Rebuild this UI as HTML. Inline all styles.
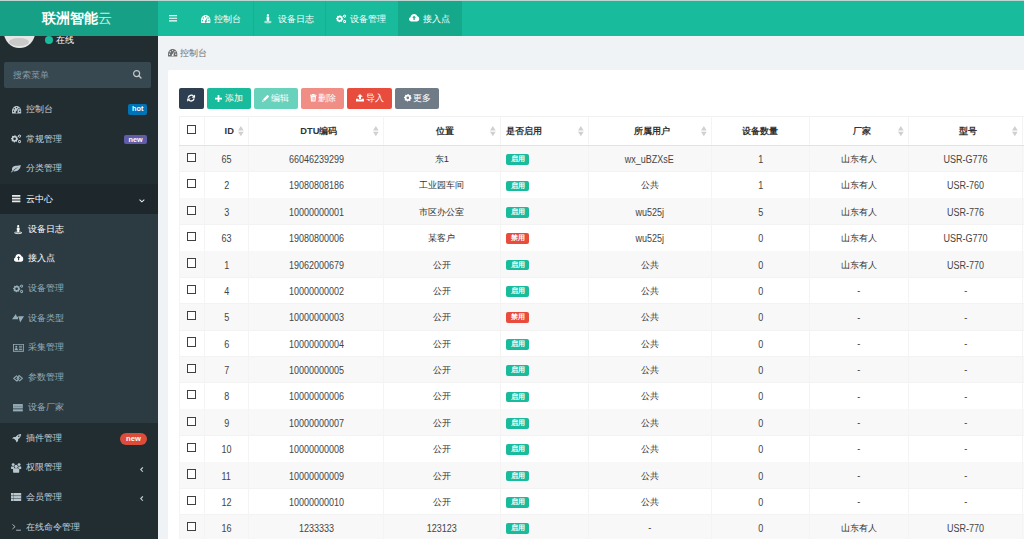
<!DOCTYPE html>
<html><head><meta charset="utf-8">
<style>
*{margin:0;padding:0;box-sizing:border-box}
html,body{width:1024px;height:539px;overflow:hidden;background:#f0f3f6;font-family:"Liberation Sans",sans-serif;font-size:9.3px;color:#333}
.abs{position:absolute}
svg{display:block;overflow:visible}
.t{position:absolute;white-space:nowrap;line-height:12px}
</style></head><body>

<div class="abs" style="left:0;top:0;width:157.6px;height:539px;background:#222d32"></div>
<div class="abs" style="left:3.6px;top:17px;width:31px;height:31px;border-radius:50%;background:#e6e6e6;overflow:hidden"><div class="abs" style="left:5.4px;top:20.5px;width:20px;height:8.5px;border-radius:50%;background:#c9c9c9"></div></div>
<div class="abs" style="left:45.3px;top:36.2px;width:7.8px;height:7.8px;border-radius:50%;background:#18bc9c"></div>
<div class="t" style="left:56.4px;top:33.6px;color:#fff;font-size:9.3px">在线</div>
<div class="abs" style="left:4px;top:62px;width:147px;height:25.5px;background:#374850;border-radius:2px"></div>
<div class="t" style="left:13.4px;top:69px;color:#8a9aa3;font-size:9.3px">搜索菜单</div>
<svg class="abs" style="left:132.7px;top:70.1px;width:8.5px;height:8.5px" viewBox="0 0 16 16" fill="#c2c6c6" preserveAspectRatio="none"><g fill="none" stroke="#c2c6c6"><circle cx="6.8" cy="6.8" r="5.7" stroke-width="2.2"/><path d="M11 11L15 15" stroke-width="2.6" stroke-linecap="round"/></g></svg>
<svg class="abs" style="left:11.6px;top:106px;width:9.2px;height:7.5px" viewBox="0 1 16 12.2" fill="#b8c7ce" preserveAspectRatio="none"><path d="M8 1C3.6 1 0 4.6 0 9v3.2c0 .6.4 1 1 1h14c.6 0 1-.4 1-1V9c0-4.4-3.6-8-8-8z"/><circle cx="3.9" cy="5.6" r="1.15" fill="#222d32"/><circle cx="8" cy="3.6" r="1.15" fill="#222d32"/><circle cx="12.1" cy="5.6" r="1.15" fill="#222d32"/><circle cx="2.6" cy="9.6" r="1.15" fill="#222d32"/><circle cx="13.4" cy="9.6" r="1.15" fill="#222d32"/><path d="M6.9 10.6L10.9 4.6 9.1 11.3z" fill="#222d32"/><circle cx="8" cy="11.2" r="1.6" fill="#222d32"/></svg>
<div class="t" style="left:26.0px;top:103.30px;color:#c4d1d7;font-size:9.3px">控制台</div>
<div class="abs" style="left:128.2px;top:104.2px;width:19px;height:10.5px;background:#0073b7;border-radius:2px;color:#fff;font-weight:bold;font-size:7.3px;line-height:10.5px;text-align:center">hot</div>
<svg class="abs" style="left:10.6px;top:134.2px;width:10.2px;height:9.7px" viewBox="0 0 15.3 14.5" fill="#c4d1d7" preserveAspectRatio="none"><polygon points="5.40,1.85 6.45,1.95 7.09,3.16 7.86,3.57 9.22,3.43 9.89,4.25 9.49,5.56 9.74,6.39 10.80,7.25 10.70,8.30 9.49,8.94 9.08,9.71 9.22,11.07 8.40,11.74 7.09,11.34 6.26,11.59 5.40,12.65 4.35,12.55 3.71,11.34 2.94,10.93 1.58,11.07 0.91,10.25 1.31,8.94 1.06,8.11 0.00,7.25 0.10,6.20 1.31,5.56 1.72,4.79 1.58,3.43 2.40,2.76 3.71,3.16 4.54,2.91"/><circle cx="5.4" cy="7.25" r="2.0" fill="#222d32"/><polygon points="12.80,0.70 13.45,0.79 13.83,1.42 14.25,1.75 14.97,1.95 15.21,2.55 14.85,3.20 14.78,3.73 14.97,4.45 14.57,4.97 13.83,4.98 13.33,5.18 12.80,5.70 12.15,5.61 11.78,4.98 11.35,4.65 10.63,4.45 10.39,3.85 10.75,3.20 10.82,2.67 10.63,1.95 11.03,1.43 11.78,1.42 12.27,1.22"/><circle cx="12.8" cy="3.2" r="0.9" fill="#222d32"/><polygon points="12.80,8.80 13.45,8.89 13.83,9.52 14.25,9.85 14.97,10.05 15.21,10.65 14.85,11.30 14.78,11.83 14.97,12.55 14.57,13.07 13.83,13.08 13.33,13.28 12.80,13.80 12.15,13.71 11.78,13.08 11.35,12.75 10.63,12.55 10.39,11.95 10.75,11.30 10.82,10.77 10.63,10.05 11.03,9.53 11.78,9.52 12.27,9.32"/><circle cx="12.8" cy="11.3" r="0.9" fill="#222d32"/></svg>
<div class="t" style="left:26.0px;top:132.50px;color:#c4d1d7;font-size:9.3px">常规管理</div>
<div class="abs" style="left:124px;top:134.6px;width:23.2px;height:9.7px;background:#605ca8;border-radius:2px;color:#fff;font-weight:bold;font-size:7.3px;line-height:9.7px;text-align:center">new</div>
<svg class="abs" style="left:11.1px;top:165px;width:9.8px;height:7.5px" viewBox="0 0 16 14" fill="#b8c7ce" preserveAspectRatio="none"><path d="M16 0c-1.5 1.2-5 .8-8.5 1.6C3.5 2.5 1.2 5 1.6 8.5c.1.8.4 1.4.8 1.9L0 13.2l.9.8 2.5-2.6c1 .6 2.6.9 4.5.4C13 10.5 15.6 5.6 16 0zM3.6 10.2C5.5 7.3 8.3 5.4 12 4.2 9 5.8 6.5 7.8 4.6 10.8z"/></svg>
<div class="t" style="left:26.0px;top:162.30px;color:#c4d1d7;font-size:9.3px">分类管理</div>
<div class="abs" style="left:0;top:184.3px;width:157.6px;height:29.3px;background:#1e282c"></div>
<svg class="abs" style="left:11.9px;top:194.9px;width:8.4px;height:7.3px" viewBox="0 0 16 16" fill="#e8eaea" preserveAspectRatio="none"><rect x="0" y="0" width="16" height="3.7" rx=".5"/><rect x="0" y="6.15" width="16" height="3.7" rx=".5"/><rect x="0" y="12.3" width="16" height="3.7" rx=".5"/></svg>
<div class="t" style="left:26.0px;top:192.70px;color:#fff;font-size:9.3px">云中心</div>
<svg class="abs" style="left:139.2px;top:198.9px;width:5.8px;height:3.6px" viewBox="0 0 12 7" fill="#f0f0f0" preserveAspectRatio="none"><path d="M1 1l5 4.5L11 1" fill="none" stroke="#f0f0f0" stroke-width="2"/></svg>
<div class="abs" style="left:0;top:213.6px;width:157.6px;height:209.1px;background:#2c3b41"></div>
<svg class="abs" style="left:13.9px;top:224.6px;width:8.4px;height:8.8px" viewBox="0 0 16 16" fill="#fff" preserveAspectRatio="none"><circle cx="8" cy="2.1" r="2.1"/><path d="M5.3 5.6c0-.6.5-1.1 1.1-1.1h3.2c.6 0 1.1.5 1.1 1.1v4.4h-1v3.2H6.3V10h-1z"/><ellipse cx="8" cy="14.2" rx="6.9" ry="1.5" fill="none" stroke="#fff" stroke-width="1.5"/></svg>
<div class="t" style="left:27.8px;top:222.80px;color:#fff;font-size:9.3px">设备日志</div>
<svg class="abs" style="left:13.5px;top:254.27px;width:9.2px;height:7.8px" viewBox="0 2.5 16 12.5" fill="#fff" preserveAspectRatio="none"><path d="M3.6 15C1.6 15 0 13.4 0 11.4c0-1.6 1-2.9 2.4-3.4C2.5 5 5 2.5 8 2.5c2.3 0 4.3 1.5 5 3.6 1.7.4 3 1.9 3 3.7v1.6c0 2-1.6 3.6-3.6 3.6z"/><path d="M8 5.6L5.1 9h1.9v3.6h2V9h1.9z" fill="#2c3b41"/></svg>
<div class="t" style="left:27.8px;top:252.47px;color:#fff;font-size:9.3px">接入点</div>
<svg class="abs" style="left:12.6px;top:283.54px;width:10.3px;height:9.6px" viewBox="0 0 15.3 14.5" fill="#95adb7" preserveAspectRatio="none"><polygon points="5.40,1.85 6.45,1.95 7.09,3.16 7.86,3.57 9.22,3.43 9.89,4.25 9.49,5.56 9.74,6.39 10.80,7.25 10.70,8.30 9.49,8.94 9.08,9.71 9.22,11.07 8.40,11.74 7.09,11.34 6.26,11.59 5.40,12.65 4.35,12.55 3.71,11.34 2.94,10.93 1.58,11.07 0.91,10.25 1.31,8.94 1.06,8.11 0.00,7.25 0.10,6.20 1.31,5.56 1.72,4.79 1.58,3.43 2.40,2.76 3.71,3.16 4.54,2.91"/><circle cx="5.4" cy="7.25" r="2.0" fill="#2c3b41"/><polygon points="12.80,0.70 13.45,0.79 13.83,1.42 14.25,1.75 14.97,1.95 15.21,2.55 14.85,3.20 14.78,3.73 14.97,4.45 14.57,4.97 13.83,4.98 13.33,5.18 12.80,5.70 12.15,5.61 11.78,4.98 11.35,4.65 10.63,4.45 10.39,3.85 10.75,3.20 10.82,2.67 10.63,1.95 11.03,1.43 11.78,1.42 12.27,1.22"/><circle cx="12.8" cy="3.2" r="0.9" fill="#2c3b41"/><polygon points="12.80,8.80 13.45,8.89 13.83,9.52 14.25,9.85 14.97,10.05 15.21,10.65 14.85,11.30 14.78,11.83 14.97,12.55 14.57,13.07 13.83,13.08 13.33,13.28 12.80,13.80 12.15,13.71 11.78,13.08 11.35,12.75 10.63,12.55 10.39,11.95 10.75,11.30 10.82,10.77 10.63,10.05 11.03,9.53 11.78,9.52 12.27,9.32"/><circle cx="12.8" cy="11.3" r="0.9" fill="#2c3b41"/></svg>
<div class="t" style="left:27.8px;top:282.14px;color:#95adb7;font-size:9.3px">设备管理</div>
<svg class="abs" style="left:12.2px;top:314.21px;width:12px;height:8.6px" viewBox="0 0 19.5 14.2" fill="#95adb7" preserveAspectRatio="none"><path d="M0 8.7L6.2 0.2 9.6 8.7zM10.4 3.6H19.5L13.2 14.2z"/><path d="M5 6.5L10.5 3.7 9.6 8.7z"/></svg>
<div class="t" style="left:27.8px;top:311.81px;color:#95adb7;font-size:9.3px">设备类型</div>
<svg class="abs" style="left:12.9px;top:343.78000000000003px;width:10.9px;height:7.7px" viewBox="0 0 16 11" fill="#95adb7" preserveAspectRatio="none"><path fill-rule="evenodd" d="M0 0h16v11H0zM1.2 1.2v8.6h13.6V1.2z"/><circle cx="4.8" cy="4" r="1.5"/><path d="M2.4 8.6c0-1.6 1-2.8 2.4-2.8s2.4 1.2 2.4 2.8z"/><rect x="8.6" y="2.6" width="5" height="1.2"/><rect x="8.6" y="5" width="5" height="1.2"/><rect x="8.6" y="7.4" width="5" height="1.2"/></svg>
<div class="t" style="left:27.8px;top:341.48px;color:#95adb7;font-size:9.3px">采集管理</div>
<svg class="abs" style="left:13px;top:374.70000000000005px;width:10.1px;height:6.7px" viewBox="1.8 0 16.4 13.4" fill="#95adb7" preserveAspectRatio="none"><g fill="none" stroke="#95adb7" stroke-width="1.9" stroke-linejoin="round"><path d="M8.2 1.2L3 6.7l5.2 5.5 2.6-2.7-2.6-2.8 2.6-2.7"/><path d="M11.8 12.2L17 6.7 11.8 1.2 9.2 3.9l2.6 2.8-2.6 2.7"/></g></svg>
<div class="t" style="left:27.8px;top:371.15px;color:#95adb7;font-size:9.3px">参数管理</div>
<svg class="abs" style="left:13.1px;top:403.52px;width:9.8px;height:7.4px" viewBox="0 0 16 12" fill="#95adb7" preserveAspectRatio="none"><rect x="0" y="0" width="16" height="7.3" opacity=".95"/><rect x="1.5" y="3.3" width="13" height=".9" fill="#2c3b41" opacity=".35"/><rect x="0" y="8.6" width="16" height="3.4"/></svg>
<div class="t" style="left:27.8px;top:400.82px;color:#95adb7;font-size:9.3px">设备厂家</div>
<svg class="abs" style="left:11.9px;top:433.6px;width:9.2px;height:8.6px" viewBox="0 0 16 16" fill="#b8c7ce" preserveAspectRatio="none"><path d="M16 0C12 .2 8.6 2.2 6.4 5.4H3L0 8.4l3.6.6 3.4 3.4.6 3.6 3-3V9.6C13.8 7.4 15.8 4 16 0z"/><circle cx="11.8" cy="4.2" r="1.2" fill="#222d32"/></svg>
<div class="t" style="left:26.0px;top:432.00px;color:#c4d1d7;font-size:9.3px">插件管理</div>
<div class="abs" style="left:120px;top:433px;width:27px;height:12.2px;background:#dd4b39;border-radius:6px;color:#fff;font-weight:bold;font-size:7.6px;line-height:12.2px;text-align:center">new</div>
<svg class="abs" style="left:10.8px;top:462.8px;width:10.3px;height:9.7px" viewBox="0 0 16 16" fill="#b8c7ce" preserveAspectRatio="none"><circle cx="3.4" cy="2.6" r="2.3"/><circle cx="12.6" cy="2.6" r="2.3"/><circle cx="8" cy="5.6" r="2.6"/><path d="M.2 5.6h4.6L4.4 10H.2zM15.8 5.6h-4.6l.4 4.4h4.2zM4 8.8h8l.8.6V15c0 .6-.4 1-1 1H4.2c-.6 0-1-.4-1-1V9.4z"/></svg>
<div class="t" style="left:26.0px;top:461.40px;color:#c4d1d7;font-size:9.3px">权限管理</div>
<svg class="abs" style="left:140.3px;top:466.7px;width:3.6px;height:5.2px" viewBox="0 0 7 12" fill="#c4d1d7" preserveAspectRatio="none"><path d="M5.6 1L1.4 6l4.2 5" fill="none" stroke="#c4d1d7" stroke-width="2.3"/></svg>
<svg class="abs" style="left:10.9px;top:492.9px;width:10.2px;height:8px" viewBox="0 0 16 12" fill="#b8c7ce" preserveAspectRatio="none"><rect x="0" y="0" width="16" height="12"/><rect x="0" y="3.6" width="16" height="1" fill="#222d32" opacity=".7"/><rect x="0" y="7.6" width="16" height="1" fill="#222d32" opacity=".7"/><rect x="3.6" y="0" width=".9" height="12" fill="#222d32" opacity=".5"/></svg>
<div class="t" style="left:26.0px;top:491.10px;color:#c4d1d7;font-size:9.3px">会员管理</div>
<svg class="abs" style="left:140.3px;top:496.4px;width:3.6px;height:5.2px" viewBox="0 0 7 12" fill="#c4d1d7" preserveAspectRatio="none"><path d="M5.6 1L1.4 6l4.2 5" fill="none" stroke="#c4d1d7" stroke-width="2.3"/></svg>
<svg class="abs" style="left:11.8px;top:524.4px;width:8.9px;height:6.7px" viewBox="0 0 16 12.5" fill="#b8c7ce" preserveAspectRatio="none"><g fill="none" stroke="#b8c7ce" stroke-width="1.6"><path d="M.8 .8L5.6 5 .8 9.2"/><path d="M7.5 11.6H16"/></g></svg>
<div class="t" style="left:26.0px;top:520.80px;color:#c4d1d7;font-size:9.3px">在线命令管理</div>
<div class="abs" style="left:0;top:0;width:157.6px;height:35.7px;background:#16a187"></div>
<div class="abs" style="left:157.6px;top:0;width:866.4px;height:35.7px;background:#18bb9b"></div>
<div class="abs" style="left:0;top:0;width:1024px;height:1px;background:#bdd6d2"></div>
<div class="t" style="left:42px;top:11px;color:#fff;font-size:13.6px;line-height:16px"><span style="font-weight:900">联洲智能</span><span style="color:#d0ece6">云</span></div>
<svg class="abs" style="left:169.3px;top:14.7px;width:8.1px;height:6.5px" viewBox="0 0 16 16" fill="#fff" preserveAspectRatio="none"><rect x="0" y="0" width="16" height="2.8" rx=".5"/><rect x="0" y="6.6" width="16" height="2.8" rx=".5"/><rect x="0" y="13.2" width="16" height="2.8" rx=".5"/></svg>
<div class="abs" style="left:397.5px;top:1px;width:64.1px;height:34.7px;background:#15a88b"></div>
<div class="abs" style="left:252.7px;top:1px;width:1px;height:34.7px;background:#17b094"></div>
<div class="abs" style="left:324.8px;top:1px;width:1px;height:34.7px;background:#17b094"></div>
<svg class="abs" style="left:200.6px;top:14.5px;width:9.4px;height:8px" viewBox="0 1 16 12.2" fill="#fff" preserveAspectRatio="none"><path d="M8 1C3.6 1 0 4.6 0 9v3.2c0 .6.4 1 1 1h14c.6 0 1-.4 1-1V9c0-4.4-3.6-8-8-8z"/><circle cx="3.9" cy="5.6" r="1.15" fill="#18bb9b"/><circle cx="8" cy="3.6" r="1.15" fill="#18bb9b"/><circle cx="12.1" cy="5.6" r="1.15" fill="#18bb9b"/><circle cx="2.6" cy="9.6" r="1.15" fill="#18bb9b"/><circle cx="13.4" cy="9.6" r="1.15" fill="#18bb9b"/><path d="M6.9 10.6L10.9 4.6 9.1 11.3z" fill="#18bb9b"/><circle cx="8" cy="11.2" r="1.6" fill="#18bb9b"/></svg>
<div class="t" style="left:214px;top:12.8px;color:#fff">控制台</div>
<svg class="abs" style="left:264.4px;top:14px;width:7.8px;height:9px" viewBox="0 0 16 16" fill="#fff" preserveAspectRatio="none"><circle cx="8" cy="2.1" r="2.1"/><path d="M5.3 5.6c0-.6.5-1.1 1.1-1.1h3.2c.6 0 1.1.5 1.1 1.1v4.4h-1v3.2H6.3V10h-1z"/><ellipse cx="8" cy="14.2" rx="6.9" ry="1.5" fill="none" stroke="#fff" stroke-width="1.5"/></svg>
<div class="t" style="left:277.7px;top:12.8px;color:#fff">设备日志</div>
<svg class="abs" style="left:336.4px;top:13.8px;width:10.3px;height:9.6px" viewBox="0 0 15.3 14.5" fill="#fff" preserveAspectRatio="none"><polygon points="5.40,1.85 6.45,1.95 7.09,3.16 7.86,3.57 9.22,3.43 9.89,4.25 9.49,5.56 9.74,6.39 10.80,7.25 10.70,8.30 9.49,8.94 9.08,9.71 9.22,11.07 8.40,11.74 7.09,11.34 6.26,11.59 5.40,12.65 4.35,12.55 3.71,11.34 2.94,10.93 1.58,11.07 0.91,10.25 1.31,8.94 1.06,8.11 0.00,7.25 0.10,6.20 1.31,5.56 1.72,4.79 1.58,3.43 2.40,2.76 3.71,3.16 4.54,2.91"/><circle cx="5.4" cy="7.25" r="2.0" fill="#18bb9b"/><polygon points="12.80,0.70 13.45,0.79 13.83,1.42 14.25,1.75 14.97,1.95 15.21,2.55 14.85,3.20 14.78,3.73 14.97,4.45 14.57,4.97 13.83,4.98 13.33,5.18 12.80,5.70 12.15,5.61 11.78,4.98 11.35,4.65 10.63,4.45 10.39,3.85 10.75,3.20 10.82,2.67 10.63,1.95 11.03,1.43 11.78,1.42 12.27,1.22"/><circle cx="12.8" cy="3.2" r="0.9" fill="#18bb9b"/><polygon points="12.80,8.80 13.45,8.89 13.83,9.52 14.25,9.85 14.97,10.05 15.21,10.65 14.85,11.30 14.78,11.83 14.97,12.55 14.57,13.07 13.83,13.08 13.33,13.28 12.80,13.80 12.15,13.71 11.78,13.08 11.35,12.75 10.63,12.55 10.39,11.95 10.75,11.30 10.82,10.77 10.63,10.05 11.03,9.53 11.78,9.52 12.27,9.32"/><circle cx="12.8" cy="11.3" r="0.9" fill="#18bb9b"/></svg>
<div class="t" style="left:350.3px;top:12.8px;color:#fff">设备管理</div>
<svg class="abs" style="left:408.9px;top:14.4px;width:10.2px;height:7.4px" viewBox="0 2.5 16 12.5" fill="#fff" preserveAspectRatio="none"><path d="M3.6 15C1.6 15 0 13.4 0 11.4c0-1.6 1-2.9 2.4-3.4C2.5 5 5 2.5 8 2.5c2.3 0 4.3 1.5 5 3.6 1.7.4 3 1.9 3 3.7v1.6c0 2-1.6 3.6-3.6 3.6z"/><path d="M8 5.6L5.1 9h1.9v3.6h2V9h1.9z" fill="#15a88b"/></svg>
<div class="t" style="left:422.8px;top:12.8px;color:#fff">接入点</div>
<svg class="abs" style="left:167.9px;top:49.4px;width:9.3px;height:7.5px" viewBox="0 1 16 12.2" fill="#6d6d6d" preserveAspectRatio="none"><path d="M8 1C3.6 1 0 4.6 0 9v3.2c0 .6.4 1 1 1h14c.6 0 1-.4 1-1V9c0-4.4-3.6-8-8-8z"/><circle cx="3.9" cy="5.6" r="1.15" fill="#f0f3f6"/><circle cx="8" cy="3.6" r="1.15" fill="#f0f3f6"/><circle cx="12.1" cy="5.6" r="1.15" fill="#f0f3f6"/><circle cx="2.6" cy="9.6" r="1.15" fill="#f0f3f6"/><circle cx="13.4" cy="9.6" r="1.15" fill="#f0f3f6"/><path d="M6.9 10.6L10.9 4.6 9.1 11.3z" fill="#f0f3f6"/><circle cx="8" cy="11.2" r="1.6" fill="#f0f3f6"/></svg>
<div class="t" style="left:180px;top:46.6px;color:#6d6d6d">控制台</div>
<div class="abs" style="left:168.2px;top:70px;width:860px;height:480px;background:#fff;border-radius:2px"></div>
<div class="abs" style="left:178.6px;top:87.8px;width:25.00px;height:21.1px;background:#2c3e50;border-radius:2px"></div>
<svg class="abs" style="left:187.3px;top:93.8px;width:8.3px;height:8.2px" viewBox="0 0 16 16" fill="#fff" preserveAspectRatio="none"><g fill="none" stroke="#fff" stroke-width="2.6"><path d="M2.3 7.3A5.8 5.8 0 0 1 12.6 4.6"/><path d="M13.7 8.7A5.8 5.8 0 0 1 3.4 11.4"/></g><path d="M15.6 .8v6.6H9z"/><path d="M.4 15.2V8.6H7z"/></svg>
<div class="abs" style="left:206.8px;top:87.8px;width:43.80px;height:21.1px;background:#18bc9c;border-radius:2px"></div>
<svg class="abs" style="left:215.4px;top:94.6px;width:7px;height:7px" viewBox="0 0 16 16" fill="#fff" preserveAspectRatio="none"><path d="M6 0h4v6h6v4h-6v6H6v-6H0V6h6z"/></svg>
<div class="t" style="left:224.5px;top:92.3px;color:#fff">添加</div>
<div class="abs" style="left:253.8px;top:87.8px;width:43.80px;height:21.1px;background:#68d2bd;border-radius:2px"></div>
<svg class="abs" style="left:262px;top:94.6px;width:7px;height:7px" viewBox="0 0 16 16" fill="#fff" preserveAspectRatio="none"><path d="M11.6 0.6c.6-.6 1.6-.6 2.2 0l1.6 1.6c.6.6.6 1.6 0 2.2L6.2 13.6 2.4 9.8zM1.6 11l3.4 3.4L0 16z"/></svg>
<div class="t" style="left:270.5px;top:92.3px;color:#fff">编辑</div>
<div class="abs" style="left:300.6px;top:87.8px;width:43.20px;height:21.1px;background:#f08d84;border-radius:2px"></div>
<svg class="abs" style="left:310px;top:94.4px;width:6.5px;height:7.6px" viewBox="0 0 16 16" fill="#fff" preserveAspectRatio="none"><path d="M5 0h6l.8 1.6H16v2H0v-2h4.2z"/><path d="M1.4 4.4h13.2L13.6 16H2.4z"/><rect x="4.6" y="6" width="1.2" height="8" fill="#f08d84"/><rect x="7.4" y="6" width="1.2" height="8" fill="#f08d84"/><rect x="10.2" y="6" width="1.2" height="8" fill="#f08d84"/></svg>
<div class="t" style="left:317.6px;top:92.3px;color:#fff">删除</div>
<div class="abs" style="left:347px;top:87.8px;width:45.00px;height:21.1px;background:#e74c3c;border-radius:2px"></div>
<svg class="abs" style="left:356px;top:94.4px;width:8px;height:7.6px" viewBox="0 0 16 16" fill="#fff" preserveAspectRatio="none"><path d="M8 0l5.6 5.6H10v5H6v-5H2.4z"/><path d="M0 10h4.5v1.4h7V10H16v6H0z"/></svg>
<div class="t" style="left:366px;top:92.3px;color:#fff">导入</div>
<div class="abs" style="left:395.3px;top:87.8px;width:43.70px;height:21.1px;background:#707b88;border-radius:2px"></div>
<svg class="abs" style="left:403.7px;top:94.4px;width:7.6px;height:7.6px" viewBox="0 0 16 16" fill="#fff" preserveAspectRatio="none"><polygon points="8.00,0.00 9.56,0.15 10.51,1.94 11.64,2.55 13.66,2.34 14.65,3.56 14.06,5.49 14.43,6.72 16.00,8.00 15.85,9.56 14.06,10.51 13.45,11.64 13.66,13.66 12.44,14.65 10.51,14.06 9.28,14.43 8.00,16.00 6.44,15.85 5.49,14.06 4.36,13.45 2.34,13.66 1.35,12.44 1.94,10.51 1.57,9.28 0.00,8.00 0.15,6.44 1.94,5.49 2.55,4.36 2.34,2.34 3.56,1.35 5.49,1.94 6.72,1.57"/><circle cx="8" cy="8" r="2.8" fill="#707b88"/></svg>
<div class="t" style="left:413px;top:92.3px;color:#fff">更多</div>
<div class="abs" style="left:179.2px;top:116.2px;width:844.8px;height:1px;background:#f1f1f1"></div>
<div class="abs" style="left:179.2px;top:145.60px;width:844.8px;height:26.37px;background:#f8f8f8"></div>
<div class="abs" style="left:179.2px;top:171.47px;width:844.8px;height:1px;background:#f3f3f3"></div>
<div class="abs" style="left:179.2px;top:197.84px;width:844.8px;height:1px;background:#f3f3f3"></div>
<div class="abs" style="left:179.2px;top:198.34px;width:844.8px;height:26.37px;background:#f8f8f8"></div>
<div class="abs" style="left:179.2px;top:224.21px;width:844.8px;height:1px;background:#f3f3f3"></div>
<div class="abs" style="left:179.2px;top:250.58px;width:844.8px;height:1px;background:#f3f3f3"></div>
<div class="abs" style="left:179.2px;top:251.08px;width:844.8px;height:26.37px;background:#f8f8f8"></div>
<div class="abs" style="left:179.2px;top:276.95px;width:844.8px;height:1px;background:#f3f3f3"></div>
<div class="abs" style="left:179.2px;top:303.32px;width:844.8px;height:1px;background:#f3f3f3"></div>
<div class="abs" style="left:179.2px;top:303.82px;width:844.8px;height:26.37px;background:#f8f8f8"></div>
<div class="abs" style="left:179.2px;top:329.69px;width:844.8px;height:1px;background:#f3f3f3"></div>
<div class="abs" style="left:179.2px;top:356.06px;width:844.8px;height:1px;background:#f3f3f3"></div>
<div class="abs" style="left:179.2px;top:356.56px;width:844.8px;height:26.37px;background:#f8f8f8"></div>
<div class="abs" style="left:179.2px;top:382.43px;width:844.8px;height:1px;background:#f3f3f3"></div>
<div class="abs" style="left:179.2px;top:408.80px;width:844.8px;height:1px;background:#f3f3f3"></div>
<div class="abs" style="left:179.2px;top:409.30px;width:844.8px;height:26.37px;background:#f8f8f8"></div>
<div class="abs" style="left:179.2px;top:435.17px;width:844.8px;height:1px;background:#f3f3f3"></div>
<div class="abs" style="left:179.2px;top:461.54px;width:844.8px;height:1px;background:#f3f3f3"></div>
<div class="abs" style="left:179.2px;top:462.04px;width:844.8px;height:26.37px;background:#f8f8f8"></div>
<div class="abs" style="left:179.2px;top:487.91px;width:844.8px;height:1px;background:#f3f3f3"></div>
<div class="abs" style="left:179.2px;top:514.28px;width:844.8px;height:1px;background:#f3f3f3"></div>
<div class="abs" style="left:179.2px;top:514.78px;width:844.8px;height:26.37px;background:#f8f8f8"></div>
<div class="abs" style="left:179.2px;top:540.65px;width:844.8px;height:1px;background:#f3f3f3"></div>
<div class="abs" style="left:178.70px;top:116.2px;width:1px;height:422.8px;background:#f4f4f4"></div>
<div class="abs" style="left:204.00px;top:116.2px;width:1px;height:422.8px;background:#f4f4f4"></div>
<div class="abs" style="left:248.10px;top:116.2px;width:1px;height:422.8px;background:#f4f4f4"></div>
<div class="abs" style="left:383.10px;top:116.2px;width:1px;height:422.8px;background:#f4f4f4"></div>
<div class="abs" style="left:499.80px;top:116.2px;width:1px;height:422.8px;background:#f4f4f4"></div>
<div class="abs" style="left:587.50px;top:116.2px;width:1px;height:422.8px;background:#f4f4f4"></div>
<div class="abs" style="left:710.60px;top:116.2px;width:1px;height:422.8px;background:#f4f4f4"></div>
<div class="abs" style="left:809.30px;top:116.2px;width:1px;height:422.8px;background:#f4f4f4"></div>
<div class="abs" style="left:907.70px;top:116.2px;width:1px;height:422.8px;background:#f4f4f4"></div>
<div class="abs" style="left:1021.90px;top:116.2px;width:1px;height:422.8px;background:#f4f4f4"></div>
<div class="abs" style="left:179.2px;top:145px;width:844.8px;height:1px;background:#e2e2e2"></div>
<div class="abs" style="left:187.1px;top:125px;width:9.2px;height:9.2px;border:1.1px solid #404040;background:#fff"></div>
<div class="t" style="left:209.9px;width:38.70px;text-align:center;top:124.80px;color:#333;font-weight:bold;">ID</div>
<svg class="abs" style="left:238.29999999999998px;top:125.7px;width:5.7px;height:10.2px" viewBox="0 0 8 16" fill="#d0d0d0" preserveAspectRatio="none"><path d="M4 0l4 7.1H0zM4 16l4-7.1H0z"/></svg>
<div class="t" style="left:254.0px;width:129.60px;text-align:center;top:124.80px;color:#333;font-weight:bold;">DTU编码</div>
<svg class="abs" style="left:373.3px;top:125.7px;width:5.7px;height:10.2px" viewBox="0 0 8 16" fill="#d0d0d0" preserveAspectRatio="none"><path d="M4 0l4 7.1H0zM4 16l4-7.1H0z"/></svg>
<div class="t" style="left:389.0px;width:111.30px;text-align:center;top:124.80px;color:#333;font-weight:bold;">位置</div>
<svg class="abs" style="left:490.0px;top:125.7px;width:5.7px;height:10.2px" viewBox="0 0 8 16" fill="#d0d0d0" preserveAspectRatio="none"><path d="M4 0l4 7.1H0zM4 16l4-7.1H0z"/></svg>
<div class="t" style="left:506.3px;top:124.80px;color:#333;font-weight:bold;">是否启用</div>
<svg class="abs" style="left:577.7px;top:125.7px;width:5.7px;height:10.2px" viewBox="0 0 8 16" fill="#d0d0d0" preserveAspectRatio="none"><path d="M4 0l4 7.1H0zM4 16l4-7.1H0z"/></svg>
<div class="t" style="left:593.4px;width:117.70px;text-align:center;top:124.80px;color:#333;font-weight:bold;">所属用户</div>
<svg class="abs" style="left:700.8000000000001px;top:125.7px;width:5.7px;height:10.2px" viewBox="0 0 8 16" fill="#d0d0d0" preserveAspectRatio="none"><path d="M4 0l4 7.1H0zM4 16l4-7.1H0z"/></svg>
<div class="t" style="left:711.1px;width:98.70px;text-align:center;top:124.80px;color:#333;font-weight:bold;">设备数量</div>
<div class="t" style="left:815.1999999999999px;width:93.00px;text-align:center;top:124.80px;color:#333;font-weight:bold;">厂家</div>
<svg class="abs" style="left:897.9000000000001px;top:125.7px;width:5.7px;height:10.2px" viewBox="0 0 8 16" fill="#d0d0d0" preserveAspectRatio="none"><path d="M4 0l4 7.1H0zM4 16l4-7.1H0z"/></svg>
<div class="t" style="left:913.6px;width:108.80px;text-align:center;top:124.80px;color:#333;font-weight:bold;">型号</div>
<svg class="abs" style="left:1012.1px;top:125.7px;width:5.7px;height:10.2px" viewBox="0 0 8 16" fill="#d0d0d0" preserveAspectRatio="none"><path d="M4 0l4 7.1H0zM4 16l4-7.1H0z"/></svg>
<div class="abs" style="left:187.1px;top:152.88px;width:9.2px;height:9.2px;border:1.1px solid #404040;background:#fff"></div>
<div class="t" style="left:204.5px;width:44.10px;text-align:center;top:154.09px;color:#333;"><span style="display:inline-block;font-size:10px;transform:scaleX(0.9);transform-origin:50% 50%;color:#444">65</span></div>
<div class="t" style="left:248.6px;width:135.00px;text-align:center;top:154.09px;color:#333;"><span style="display:inline-block;font-size:10px;transform:scaleX(0.9);transform-origin:50% 50%;color:#444">66046239299</span></div>
<div class="t" style="left:383.6px;width:116.70px;text-align:center;top:153.09px;color:#333;">东1</div>
<div class="abs" style="left:506.4px;top:154.19px;width:22.4px;height:10.8px;background:#18bc9c;border-radius:2px;color:#fff;font-weight:bold;font-size:7.2px;line-height:10.8px;text-align:center">启用</div>
<div class="t" style="left:588.0px;width:123.10px;text-align:center;top:154.09px;color:#333;"><span style="display:inline-block;font-size:10px;transform:scaleX(0.9);transform-origin:50% 50%;color:#444">wx_uBZXsE</span></div>
<div class="t" style="left:711.1px;width:98.70px;text-align:center;top:154.09px;color:#333;"><span style="display:inline-block;font-size:10px;transform:scaleX(0.9);transform-origin:50% 50%;color:#444">1</span></div>
<div class="t" style="left:809.8px;width:98.40px;text-align:center;top:153.09px;color:#333;">山东有人</div>
<div class="t" style="left:908.2px;width:114.20px;text-align:center;top:154.09px;color:#333;"><span style="display:inline-block;font-size:10px;transform:scaleX(0.9);transform-origin:50% 50%;color:#444">USR-G776</span></div>
<div class="abs" style="left:187.1px;top:179.25px;width:9.2px;height:9.2px;border:1.1px solid #404040;background:#fff"></div>
<div class="t" style="left:204.5px;width:44.10px;text-align:center;top:180.46px;color:#333;"><span style="display:inline-block;font-size:10px;transform:scaleX(0.9);transform-origin:50% 50%;color:#444">2</span></div>
<div class="t" style="left:248.6px;width:135.00px;text-align:center;top:180.46px;color:#333;"><span style="display:inline-block;font-size:10px;transform:scaleX(0.9);transform-origin:50% 50%;color:#444">19080808186</span></div>
<div class="t" style="left:383.6px;width:116.70px;text-align:center;top:179.46px;color:#333;">工业园车间</div>
<div class="abs" style="left:506.4px;top:180.56px;width:22.4px;height:10.8px;background:#18bc9c;border-radius:2px;color:#fff;font-weight:bold;font-size:7.2px;line-height:10.8px;text-align:center">启用</div>
<div class="t" style="left:588.0px;width:123.10px;text-align:center;top:179.46px;color:#333;">公共</div>
<div class="t" style="left:711.1px;width:98.70px;text-align:center;top:180.46px;color:#333;"><span style="display:inline-block;font-size:10px;transform:scaleX(0.9);transform-origin:50% 50%;color:#444">1</span></div>
<div class="t" style="left:809.8px;width:98.40px;text-align:center;top:179.46px;color:#333;">山东有人</div>
<div class="t" style="left:908.2px;width:114.20px;text-align:center;top:180.46px;color:#333;"><span style="display:inline-block;font-size:10px;transform:scaleX(0.9);transform-origin:50% 50%;color:#444">USR-760</span></div>
<div class="abs" style="left:187.1px;top:205.62px;width:9.2px;height:9.2px;border:1.1px solid #404040;background:#fff"></div>
<div class="t" style="left:204.5px;width:44.10px;text-align:center;top:206.83px;color:#333;"><span style="display:inline-block;font-size:10px;transform:scaleX(0.9);transform-origin:50% 50%;color:#444">3</span></div>
<div class="t" style="left:248.6px;width:135.00px;text-align:center;top:206.83px;color:#333;"><span style="display:inline-block;font-size:10px;transform:scaleX(0.9);transform-origin:50% 50%;color:#444">10000000001</span></div>
<div class="t" style="left:383.6px;width:116.70px;text-align:center;top:205.83px;color:#333;">市区办公室</div>
<div class="abs" style="left:506.4px;top:206.93px;width:22.4px;height:10.8px;background:#18bc9c;border-radius:2px;color:#fff;font-weight:bold;font-size:7.2px;line-height:10.8px;text-align:center">启用</div>
<div class="t" style="left:588.0px;width:123.10px;text-align:center;top:206.83px;color:#333;"><span style="display:inline-block;font-size:10px;transform:scaleX(0.9);transform-origin:50% 50%;color:#444">wu525j</span></div>
<div class="t" style="left:711.1px;width:98.70px;text-align:center;top:206.83px;color:#333;"><span style="display:inline-block;font-size:10px;transform:scaleX(0.9);transform-origin:50% 50%;color:#444">5</span></div>
<div class="t" style="left:809.8px;width:98.40px;text-align:center;top:205.83px;color:#333;">山东有人</div>
<div class="t" style="left:908.2px;width:114.20px;text-align:center;top:206.83px;color:#333;"><span style="display:inline-block;font-size:10px;transform:scaleX(0.9);transform-origin:50% 50%;color:#444">USR-776</span></div>
<div class="abs" style="left:187.1px;top:231.99px;width:9.2px;height:9.2px;border:1.1px solid #404040;background:#fff"></div>
<div class="t" style="left:204.5px;width:44.10px;text-align:center;top:233.19px;color:#333;"><span style="display:inline-block;font-size:10px;transform:scaleX(0.9);transform-origin:50% 50%;color:#444">63</span></div>
<div class="t" style="left:248.6px;width:135.00px;text-align:center;top:233.19px;color:#333;"><span style="display:inline-block;font-size:10px;transform:scaleX(0.9);transform-origin:50% 50%;color:#444">19080800006</span></div>
<div class="t" style="left:383.6px;width:116.70px;text-align:center;top:232.19px;color:#333;">某客户</div>
<div class="abs" style="left:506.4px;top:233.29px;width:22.4px;height:10.8px;background:#e74c3c;border-radius:2px;color:#fff;font-weight:bold;font-size:7.2px;line-height:10.8px;text-align:center">禁用</div>
<div class="t" style="left:588.0px;width:123.10px;text-align:center;top:233.19px;color:#333;"><span style="display:inline-block;font-size:10px;transform:scaleX(0.9);transform-origin:50% 50%;color:#444">wu525j</span></div>
<div class="t" style="left:711.1px;width:98.70px;text-align:center;top:233.19px;color:#333;"><span style="display:inline-block;font-size:10px;transform:scaleX(0.9);transform-origin:50% 50%;color:#444">0</span></div>
<div class="t" style="left:809.8px;width:98.40px;text-align:center;top:232.19px;color:#333;">山东有人</div>
<div class="t" style="left:908.2px;width:114.20px;text-align:center;top:233.19px;color:#333;"><span style="display:inline-block;font-size:10px;transform:scaleX(0.9);transform-origin:50% 50%;color:#444">USR-G770</span></div>
<div class="abs" style="left:187.1px;top:258.37px;width:9.2px;height:9.2px;border:1.1px solid #404040;background:#fff"></div>
<div class="t" style="left:204.5px;width:44.10px;text-align:center;top:259.56px;color:#333;"><span style="display:inline-block;font-size:10px;transform:scaleX(0.9);transform-origin:50% 50%;color:#444">1</span></div>
<div class="t" style="left:248.6px;width:135.00px;text-align:center;top:259.56px;color:#333;"><span style="display:inline-block;font-size:10px;transform:scaleX(0.9);transform-origin:50% 50%;color:#444">19062000679</span></div>
<div class="t" style="left:383.6px;width:116.70px;text-align:center;top:258.56px;color:#333;">公开</div>
<div class="abs" style="left:506.4px;top:259.66px;width:22.4px;height:10.8px;background:#18bc9c;border-radius:2px;color:#fff;font-weight:bold;font-size:7.2px;line-height:10.8px;text-align:center">启用</div>
<div class="t" style="left:588.0px;width:123.10px;text-align:center;top:258.56px;color:#333;">公共</div>
<div class="t" style="left:711.1px;width:98.70px;text-align:center;top:259.56px;color:#333;"><span style="display:inline-block;font-size:10px;transform:scaleX(0.9);transform-origin:50% 50%;color:#444">0</span></div>
<div class="t" style="left:809.8px;width:98.40px;text-align:center;top:258.56px;color:#333;">山东有人</div>
<div class="t" style="left:908.2px;width:114.20px;text-align:center;top:259.56px;color:#333;"><span style="display:inline-block;font-size:10px;transform:scaleX(0.9);transform-origin:50% 50%;color:#444">USR-770</span></div>
<div class="abs" style="left:187.1px;top:284.74px;width:9.2px;height:9.2px;border:1.1px solid #404040;background:#fff"></div>
<div class="t" style="left:204.5px;width:44.10px;text-align:center;top:285.94px;color:#333;"><span style="display:inline-block;font-size:10px;transform:scaleX(0.9);transform-origin:50% 50%;color:#444">4</span></div>
<div class="t" style="left:248.6px;width:135.00px;text-align:center;top:285.94px;color:#333;"><span style="display:inline-block;font-size:10px;transform:scaleX(0.9);transform-origin:50% 50%;color:#444">10000000002</span></div>
<div class="t" style="left:383.6px;width:116.70px;text-align:center;top:284.94px;color:#333;">公开</div>
<div class="abs" style="left:506.4px;top:286.03px;width:22.4px;height:10.8px;background:#18bc9c;border-radius:2px;color:#fff;font-weight:bold;font-size:7.2px;line-height:10.8px;text-align:center">启用</div>
<div class="t" style="left:588.0px;width:123.10px;text-align:center;top:284.94px;color:#333;">公共</div>
<div class="t" style="left:711.1px;width:98.70px;text-align:center;top:285.94px;color:#333;"><span style="display:inline-block;font-size:10px;transform:scaleX(0.9);transform-origin:50% 50%;color:#444">0</span></div>
<div class="t" style="left:809.8px;width:98.40px;text-align:center;top:285.13px;color:#333;"><span style="display:inline-block;font-size:10px;transform:scaleX(0.9);transform-origin:50% 50%;color:#444">-</span></div>
<div class="t" style="left:908.2px;width:114.20px;text-align:center;top:285.13px;color:#333;"><span style="display:inline-block;font-size:10px;transform:scaleX(0.9);transform-origin:50% 50%;color:#444">-</span></div>
<div class="abs" style="left:187.1px;top:311.11px;width:9.2px;height:9.2px;border:1.1px solid #404040;background:#fff"></div>
<div class="t" style="left:204.5px;width:44.10px;text-align:center;top:312.31px;color:#333;"><span style="display:inline-block;font-size:10px;transform:scaleX(0.9);transform-origin:50% 50%;color:#444">5</span></div>
<div class="t" style="left:248.6px;width:135.00px;text-align:center;top:312.31px;color:#333;"><span style="display:inline-block;font-size:10px;transform:scaleX(0.9);transform-origin:50% 50%;color:#444">10000000003</span></div>
<div class="t" style="left:383.6px;width:116.70px;text-align:center;top:311.31px;color:#333;">公开</div>
<div class="abs" style="left:506.4px;top:312.40px;width:22.4px;height:10.8px;background:#e74c3c;border-radius:2px;color:#fff;font-weight:bold;font-size:7.2px;line-height:10.8px;text-align:center">禁用</div>
<div class="t" style="left:588.0px;width:123.10px;text-align:center;top:311.31px;color:#333;">公共</div>
<div class="t" style="left:711.1px;width:98.70px;text-align:center;top:312.31px;color:#333;"><span style="display:inline-block;font-size:10px;transform:scaleX(0.9);transform-origin:50% 50%;color:#444">0</span></div>
<div class="t" style="left:809.8px;width:98.40px;text-align:center;top:311.50px;color:#333;"><span style="display:inline-block;font-size:10px;transform:scaleX(0.9);transform-origin:50% 50%;color:#444">-</span></div>
<div class="t" style="left:908.2px;width:114.20px;text-align:center;top:311.50px;color:#333;"><span style="display:inline-block;font-size:10px;transform:scaleX(0.9);transform-origin:50% 50%;color:#444">-</span></div>
<div class="abs" style="left:187.1px;top:337.48px;width:9.2px;height:9.2px;border:1.1px solid #404040;background:#fff"></div>
<div class="t" style="left:204.5px;width:44.10px;text-align:center;top:338.68px;color:#333;"><span style="display:inline-block;font-size:10px;transform:scaleX(0.9);transform-origin:50% 50%;color:#444">6</span></div>
<div class="t" style="left:248.6px;width:135.00px;text-align:center;top:338.68px;color:#333;"><span style="display:inline-block;font-size:10px;transform:scaleX(0.9);transform-origin:50% 50%;color:#444">10000000004</span></div>
<div class="t" style="left:383.6px;width:116.70px;text-align:center;top:337.68px;color:#333;">公开</div>
<div class="abs" style="left:506.4px;top:338.77px;width:22.4px;height:10.8px;background:#18bc9c;border-radius:2px;color:#fff;font-weight:bold;font-size:7.2px;line-height:10.8px;text-align:center">启用</div>
<div class="t" style="left:588.0px;width:123.10px;text-align:center;top:337.68px;color:#333;">公共</div>
<div class="t" style="left:711.1px;width:98.70px;text-align:center;top:338.68px;color:#333;"><span style="display:inline-block;font-size:10px;transform:scaleX(0.9);transform-origin:50% 50%;color:#444">0</span></div>
<div class="t" style="left:809.8px;width:98.40px;text-align:center;top:337.88px;color:#333;"><span style="display:inline-block;font-size:10px;transform:scaleX(0.9);transform-origin:50% 50%;color:#444">-</span></div>
<div class="t" style="left:908.2px;width:114.20px;text-align:center;top:337.88px;color:#333;"><span style="display:inline-block;font-size:10px;transform:scaleX(0.9);transform-origin:50% 50%;color:#444">-</span></div>
<div class="abs" style="left:187.1px;top:363.85px;width:9.2px;height:9.2px;border:1.1px solid #404040;background:#fff"></div>
<div class="t" style="left:204.5px;width:44.10px;text-align:center;top:365.05px;color:#333;"><span style="display:inline-block;font-size:10px;transform:scaleX(0.9);transform-origin:50% 50%;color:#444">7</span></div>
<div class="t" style="left:248.6px;width:135.00px;text-align:center;top:365.05px;color:#333;"><span style="display:inline-block;font-size:10px;transform:scaleX(0.9);transform-origin:50% 50%;color:#444">10000000005</span></div>
<div class="t" style="left:383.6px;width:116.70px;text-align:center;top:364.05px;color:#333;">公开</div>
<div class="abs" style="left:506.4px;top:365.14px;width:22.4px;height:10.8px;background:#18bc9c;border-radius:2px;color:#fff;font-weight:bold;font-size:7.2px;line-height:10.8px;text-align:center">启用</div>
<div class="t" style="left:588.0px;width:123.10px;text-align:center;top:364.05px;color:#333;">公共</div>
<div class="t" style="left:711.1px;width:98.70px;text-align:center;top:365.05px;color:#333;"><span style="display:inline-block;font-size:10px;transform:scaleX(0.9);transform-origin:50% 50%;color:#444">0</span></div>
<div class="t" style="left:809.8px;width:98.40px;text-align:center;top:364.25px;color:#333;"><span style="display:inline-block;font-size:10px;transform:scaleX(0.9);transform-origin:50% 50%;color:#444">-</span></div>
<div class="t" style="left:908.2px;width:114.20px;text-align:center;top:364.25px;color:#333;"><span style="display:inline-block;font-size:10px;transform:scaleX(0.9);transform-origin:50% 50%;color:#444">-</span></div>
<div class="abs" style="left:187.1px;top:390.22px;width:9.2px;height:9.2px;border:1.1px solid #404040;background:#fff"></div>
<div class="t" style="left:204.5px;width:44.10px;text-align:center;top:391.42px;color:#333;"><span style="display:inline-block;font-size:10px;transform:scaleX(0.9);transform-origin:50% 50%;color:#444">8</span></div>
<div class="t" style="left:248.6px;width:135.00px;text-align:center;top:391.42px;color:#333;"><span style="display:inline-block;font-size:10px;transform:scaleX(0.9);transform-origin:50% 50%;color:#444">10000000006</span></div>
<div class="t" style="left:383.6px;width:116.70px;text-align:center;top:390.42px;color:#333;">公开</div>
<div class="abs" style="left:506.4px;top:391.51px;width:22.4px;height:10.8px;background:#18bc9c;border-radius:2px;color:#fff;font-weight:bold;font-size:7.2px;line-height:10.8px;text-align:center">启用</div>
<div class="t" style="left:588.0px;width:123.10px;text-align:center;top:390.42px;color:#333;">公共</div>
<div class="t" style="left:711.1px;width:98.70px;text-align:center;top:391.42px;color:#333;"><span style="display:inline-block;font-size:10px;transform:scaleX(0.9);transform-origin:50% 50%;color:#444">0</span></div>
<div class="t" style="left:809.8px;width:98.40px;text-align:center;top:390.62px;color:#333;"><span style="display:inline-block;font-size:10px;transform:scaleX(0.9);transform-origin:50% 50%;color:#444">-</span></div>
<div class="t" style="left:908.2px;width:114.20px;text-align:center;top:390.62px;color:#333;"><span style="display:inline-block;font-size:10px;transform:scaleX(0.9);transform-origin:50% 50%;color:#444">-</span></div>
<div class="abs" style="left:187.1px;top:416.58px;width:9.2px;height:9.2px;border:1.1px solid #404040;background:#fff"></div>
<div class="t" style="left:204.5px;width:44.10px;text-align:center;top:417.78px;color:#333;"><span style="display:inline-block;font-size:10px;transform:scaleX(0.9);transform-origin:50% 50%;color:#444">9</span></div>
<div class="t" style="left:248.6px;width:135.00px;text-align:center;top:417.78px;color:#333;"><span style="display:inline-block;font-size:10px;transform:scaleX(0.9);transform-origin:50% 50%;color:#444">10000000007</span></div>
<div class="t" style="left:383.6px;width:116.70px;text-align:center;top:416.78px;color:#333;">公开</div>
<div class="abs" style="left:506.4px;top:417.88px;width:22.4px;height:10.8px;background:#18bc9c;border-radius:2px;color:#fff;font-weight:bold;font-size:7.2px;line-height:10.8px;text-align:center">启用</div>
<div class="t" style="left:588.0px;width:123.10px;text-align:center;top:416.78px;color:#333;">公共</div>
<div class="t" style="left:711.1px;width:98.70px;text-align:center;top:417.78px;color:#333;"><span style="display:inline-block;font-size:10px;transform:scaleX(0.9);transform-origin:50% 50%;color:#444">0</span></div>
<div class="t" style="left:809.8px;width:98.40px;text-align:center;top:416.98px;color:#333;"><span style="display:inline-block;font-size:10px;transform:scaleX(0.9);transform-origin:50% 50%;color:#444">-</span></div>
<div class="t" style="left:908.2px;width:114.20px;text-align:center;top:416.98px;color:#333;"><span style="display:inline-block;font-size:10px;transform:scaleX(0.9);transform-origin:50% 50%;color:#444">-</span></div>
<div class="abs" style="left:187.1px;top:442.95px;width:9.2px;height:9.2px;border:1.1px solid #404040;background:#fff"></div>
<div class="t" style="left:204.5px;width:44.10px;text-align:center;top:444.15px;color:#333;"><span style="display:inline-block;font-size:10px;transform:scaleX(0.9);transform-origin:50% 50%;color:#444">10</span></div>
<div class="t" style="left:248.6px;width:135.00px;text-align:center;top:444.15px;color:#333;"><span style="display:inline-block;font-size:10px;transform:scaleX(0.9);transform-origin:50% 50%;color:#444">10000000008</span></div>
<div class="t" style="left:383.6px;width:116.70px;text-align:center;top:443.15px;color:#333;">公开</div>
<div class="abs" style="left:506.4px;top:444.25px;width:22.4px;height:10.8px;background:#18bc9c;border-radius:2px;color:#fff;font-weight:bold;font-size:7.2px;line-height:10.8px;text-align:center">启用</div>
<div class="t" style="left:588.0px;width:123.10px;text-align:center;top:443.15px;color:#333;">公共</div>
<div class="t" style="left:711.1px;width:98.70px;text-align:center;top:444.15px;color:#333;"><span style="display:inline-block;font-size:10px;transform:scaleX(0.9);transform-origin:50% 50%;color:#444">0</span></div>
<div class="t" style="left:809.8px;width:98.40px;text-align:center;top:443.35px;color:#333;"><span style="display:inline-block;font-size:10px;transform:scaleX(0.9);transform-origin:50% 50%;color:#444">-</span></div>
<div class="t" style="left:908.2px;width:114.20px;text-align:center;top:443.35px;color:#333;"><span style="display:inline-block;font-size:10px;transform:scaleX(0.9);transform-origin:50% 50%;color:#444">-</span></div>
<div class="abs" style="left:187.1px;top:469.32px;width:9.2px;height:9.2px;border:1.1px solid #404040;background:#fff"></div>
<div class="t" style="left:204.5px;width:44.10px;text-align:center;top:470.52px;color:#333;"><span style="display:inline-block;font-size:10px;transform:scaleX(0.9);transform-origin:50% 50%;color:#444">11</span></div>
<div class="t" style="left:248.6px;width:135.00px;text-align:center;top:470.52px;color:#333;"><span style="display:inline-block;font-size:10px;transform:scaleX(0.9);transform-origin:50% 50%;color:#444">10000000009</span></div>
<div class="t" style="left:383.6px;width:116.70px;text-align:center;top:469.52px;color:#333;">公开</div>
<div class="abs" style="left:506.4px;top:470.62px;width:22.4px;height:10.8px;background:#18bc9c;border-radius:2px;color:#fff;font-weight:bold;font-size:7.2px;line-height:10.8px;text-align:center">启用</div>
<div class="t" style="left:588.0px;width:123.10px;text-align:center;top:469.52px;color:#333;">公共</div>
<div class="t" style="left:711.1px;width:98.70px;text-align:center;top:470.52px;color:#333;"><span style="display:inline-block;font-size:10px;transform:scaleX(0.9);transform-origin:50% 50%;color:#444">0</span></div>
<div class="t" style="left:809.8px;width:98.40px;text-align:center;top:469.72px;color:#333;"><span style="display:inline-block;font-size:10px;transform:scaleX(0.9);transform-origin:50% 50%;color:#444">-</span></div>
<div class="t" style="left:908.2px;width:114.20px;text-align:center;top:469.72px;color:#333;"><span style="display:inline-block;font-size:10px;transform:scaleX(0.9);transform-origin:50% 50%;color:#444">-</span></div>
<div class="abs" style="left:187.1px;top:495.69px;width:9.2px;height:9.2px;border:1.1px solid #404040;background:#fff"></div>
<div class="t" style="left:204.5px;width:44.10px;text-align:center;top:496.89px;color:#333;"><span style="display:inline-block;font-size:10px;transform:scaleX(0.9);transform-origin:50% 50%;color:#444">12</span></div>
<div class="t" style="left:248.6px;width:135.00px;text-align:center;top:496.89px;color:#333;"><span style="display:inline-block;font-size:10px;transform:scaleX(0.9);transform-origin:50% 50%;color:#444">10000000010</span></div>
<div class="t" style="left:383.6px;width:116.70px;text-align:center;top:495.89px;color:#333;">公开</div>
<div class="abs" style="left:506.4px;top:496.99px;width:22.4px;height:10.8px;background:#18bc9c;border-radius:2px;color:#fff;font-weight:bold;font-size:7.2px;line-height:10.8px;text-align:center">启用</div>
<div class="t" style="left:588.0px;width:123.10px;text-align:center;top:495.89px;color:#333;">公共</div>
<div class="t" style="left:711.1px;width:98.70px;text-align:center;top:496.89px;color:#333;"><span style="display:inline-block;font-size:10px;transform:scaleX(0.9);transform-origin:50% 50%;color:#444">0</span></div>
<div class="t" style="left:809.8px;width:98.40px;text-align:center;top:496.09px;color:#333;"><span style="display:inline-block;font-size:10px;transform:scaleX(0.9);transform-origin:50% 50%;color:#444">-</span></div>
<div class="t" style="left:908.2px;width:114.20px;text-align:center;top:496.09px;color:#333;"><span style="display:inline-block;font-size:10px;transform:scaleX(0.9);transform-origin:50% 50%;color:#444">-</span></div>
<div class="abs" style="left:187.1px;top:522.06px;width:9.2px;height:9.2px;border:1.1px solid #404040;background:#fff"></div>
<div class="t" style="left:204.5px;width:44.10px;text-align:center;top:523.26px;color:#333;"><span style="display:inline-block;font-size:10px;transform:scaleX(0.9);transform-origin:50% 50%;color:#444">16</span></div>
<div class="t" style="left:248.6px;width:135.00px;text-align:center;top:523.26px;color:#333;"><span style="display:inline-block;font-size:10px;transform:scaleX(0.9);transform-origin:50% 50%;color:#444">1233333</span></div>
<div class="t" style="left:383.6px;width:116.70px;text-align:center;top:523.26px;color:#333;"><span style="display:inline-block;font-size:10px;transform:scaleX(0.9);transform-origin:50% 50%;color:#444">123123</span></div>
<div class="abs" style="left:506.4px;top:523.36px;width:22.4px;height:10.8px;background:#18bc9c;border-radius:2px;color:#fff;font-weight:bold;font-size:7.2px;line-height:10.8px;text-align:center">启用</div>
<div class="t" style="left:588.0px;width:123.10px;text-align:center;top:522.46px;color:#333;"><span style="display:inline-block;font-size:10px;transform:scaleX(0.9);transform-origin:50% 50%;color:#444">-</span></div>
<div class="t" style="left:711.1px;width:98.70px;text-align:center;top:523.26px;color:#333;"><span style="display:inline-block;font-size:10px;transform:scaleX(0.9);transform-origin:50% 50%;color:#444">0</span></div>
<div class="t" style="left:809.8px;width:98.40px;text-align:center;top:522.26px;color:#333;">山东有人</div>
<div class="t" style="left:908.2px;width:114.20px;text-align:center;top:523.26px;color:#333;"><span style="display:inline-block;font-size:10px;transform:scaleX(0.9);transform-origin:50% 50%;color:#444">USR-770</span></div>
</body></html>
